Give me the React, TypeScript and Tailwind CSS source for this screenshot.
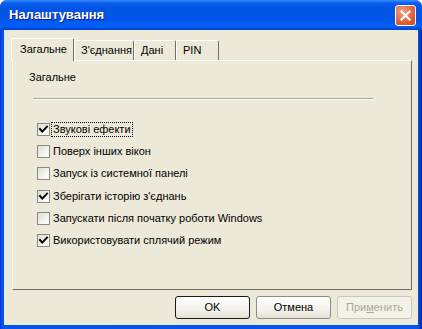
import React from "react";

const font = { fontFamily: '"Liberation Sans", Arial, sans-serif' };

function CheckBox({ checked }: { checked: boolean }) {
  return (
    <div className="w-[13px] h-[13px] border border-[#8a8a84] bg-[linear-gradient(135deg,#dcdcd6_0%,#f4f4f0_60%,#ffffff_100%)] flex items-center justify-center shrink-0">
      {checked && (
        <svg width="11" height="11" viewBox="0 0 11 11">
          <polyline points="2,5 4.3,7.6 9,2.6" fill="none" stroke="#000" strokeWidth="2" strokeLinecap="square" />
        </svg>
      )}
    </div>
  );
}

function Row({ checked, label, focus }: { checked: boolean; label: string; focus?: boolean }) {
  return (
    <div className="h-[22.3px] flex items-center pl-[24px]">
      <CheckBox checked={checked} />
      <span
        className={
          "ml-[2px] px-[1px] leading-[13px] text-[11px] text-black " +
          (focus ? "outline outline-1 outline-dotted outline-black" : "")
        }
      >
        {label}
      </span>
    </div>
  );
}

function Tab({ label, w, selected }: { label: string; w: number; selected?: boolean }) {
  return (
    <div
      style={{ width: w }}
      className={
        "bg-[#ECE9D8] border-l border-t border-white border-r border-r-[#716F64] rounded-t-[2px] text-[11px] text-black flex items-center " +
        (selected ? "h-[23px] -mb-[1px] relative z-10 pl-[8px] pb-[2px]" : "h-[20px] pl-[6px]")
      }
    >
      {label}
    </div>
  );
}

function Button({ label, def, disabled }: { label: React.ReactNode; def?: boolean; disabled?: boolean }) {
  return (
    <div
      className={
        "w-[75px] h-[23px] rounded-[3px] border flex items-center justify-center text-[11px] " +
        (def
          ? "border-[#1a1a1a] bg-[linear-gradient(180deg,#ffffff_0%,#f3f2ec_60%,#e3e1d6_100%)] text-black"
          : disabled
          ? "border-[#c9c7ba] bg-[#f2f1ea] text-[#aca899]"
          : "border-[#8d8c86] bg-[linear-gradient(180deg,#ffffff_0%,#f3f2ec_60%,#e3e1d6_100%)] text-black")
      }
    >
      {label}
    </div>
  );
}

export default function App() {
  return (
    <div className="w-[422px] h-[329px] bg-white" style={font}>
      <div className="w-[422px] h-[329px] rounded-t-[7px] overflow-hidden flex flex-col bg-[linear-gradient(90deg,#0831d9_0px,#0055ea_2px,#0058ee_418px,#001ea0_422px)]">
        {/* Title bar */}
        <div className="h-[30px] shrink-0 flex items-center justify-between pl-[9px] pr-[6px] bg-[linear-gradient(180deg,#3a8cff_0px,#0a5fef_3px,#0054e3_8px,#0055ea_20px,#0062fa_26px,#0052e0_28px,#003dd7_30px)]">
          <span className="text-white font-bold text-[13px] [text-shadow:1px_1px_0_#0a1e8c]">Налаштування</span>
          <div className="w-[21px] h-[21px] rounded-[3px] border border-white bg-[radial-gradient(circle_at_35%_30%,#f3a184_0%,#e2643f_55%,#c9461c_100%)] flex items-center justify-center">
            <svg width="11" height="11" viewBox="0 0 11 11">
              <path d="M1.5 1.5 L9.5 9.5 M9.5 1.5 L1.5 9.5" stroke="#fff" strokeWidth="2.2" strokeLinecap="square" />
            </svg>
          </div>
        </div>
        {/* Body */}
        <div className="flex-1 ml-[4px] mr-[4px] mb-[4px] bg-[#ECE9D8] flex flex-col pl-[8px] pr-[6px] pt-[8px]">
          <div className="flex items-end h-[22px] -ml-[1px]">
            <Tab label="Загальне" w={63} selected />
            <Tab label="З'єднання" w={60} />
            <Tab label="Дані" w={42} />
            <Tab label="PIN" w={43} />
          </div>
          <div className="w-[400px] h-[230px] border-t border-l border-white border-r border-b border-r-[#716F64] border-b-[#716F64] bg-[#ECE9D8] flex flex-col">
            <div className="pl-[16px] pt-[10px] text-[11px] leading-[13px] text-black">Загальне</div>
            <div className="ml-[20px] w-[340px] mt-[14px] border-t border-[#ACA899] border-b border-b-white" />
            <div className="mt-[18px] flex flex-col">
              <Row checked label="Звукові ефекти" focus />
              <Row checked={false} label="Поверх інших вікон" />
              <Row checked={false} label="Запуск із системної панелі" />
              <Row checked label="Зберігати історію з'єднань" />
              <Row checked={false} label="Запускати після початку роботи Windows" />
              <Row checked label="Використовувати сплячий режим" />
            </div>
          </div>
          <div className="flex justify-end gap-[6px] mt-[6px] pr-[0px]">
            <Button label="OK" def />
            <Button label="Отмена" />
            <Button
              label={
                <span>
                  При<span className="underline">м</span>енить
                </span>
              }
              disabled
            />
          </div>
        </div>
      </div>
    </div>
  );
}
